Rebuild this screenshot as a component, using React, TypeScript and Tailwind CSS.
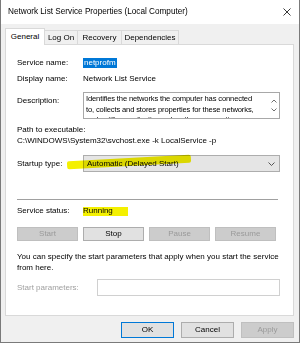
import React from 'react';

const font = { fontFamily: '"Liberation Sans", Arial, sans-serif' };

const Btn = ({ label, disabled = false, def = false, w = 'w-[61px]' }: { label: string; disabled?: boolean; def?: boolean; w?: string }) => (
  <div
    className={`${w} h-[14px] flex items-center justify-center text-[8px] border ${
      disabled
        ? 'bg-[#cccccc] border-[#bfbfbf] text-[#9a9a9a]'
        : def
        ? 'bg-[#e1e1e1] border-[#0078d7] text-black'
        : 'bg-[#e1e1e1] border-[#adadad] text-black'
    }`}
  >
    {label}
  </div>
);

export default function App() {
  return (
    <div className="w-[300px] h-[346px] bg-white overflow-hidden text-black" style={font}>
      <div className="relative h-[343px] border-l border-r border-b border-[#7a7a7a] bg-[#f0f0f0] flex flex-col">
        {/* Title bar */}
        <div className="h-[24px] bg-white flex items-center justify-between pl-[7px] pr-[8px] shrink-0">
          <span className="text-[8.2px]">Network List Service Properties (Local Computer)</span>
          <svg width="8" height="8" viewBox="0 0 8 8">
            <path d="M0.5 0.5 L7.5 7.5 M7.5 0.5 L0.5 7.5" stroke="#222" strokeWidth="0.9" />
          </svg>
        </div>

        {/* Tabs */}
        <div className="flex items-end px-[4px] h-[20px] shrink-0">
          <div className="w-[40px] h-[17px] bg-white border border-b-0 border-[#d9d9d9] text-[8px] flex items-center justify-center relative top-[1px] z-10">
            General
          </div>
          <div className="w-[33px] h-[14px] border border-l-0 border-b-0 border-[#d9d9d9] text-[8px] flex items-center justify-center">
            Log On
          </div>
          <div className="w-[44px] h-[14px] border border-l-0 border-b-0 border-[#d9d9d9] text-[8px] flex items-center justify-center">
            Recovery
          </div>
          <div className="w-[57px] h-[14px] border border-l-0 border-b-0 border-[#d9d9d9] text-[8px] flex items-center justify-center">
            Dependencies
          </div>
        </div>

        {/* Panel */}
        <div className="relative mx-[4px] w-[289px] h-[272px] bg-white border border-[#d9d9d9] pt-[12px] pl-[11px] text-[8px] shrink-0">
          <div className="flex items-center h-[12px]">
            <span className="w-[66px]">Service name:</span>
            <span className="bg-[#0078d7] text-white px-[1px] leading-[10px]">netprofm</span>
          </div>
          <div className="flex items-center h-[12px] mt-[4px]">
            <span className="w-[66px]">Display name:</span>
            <span>Network List Service</span>
          </div>
          <div className="flex mt-[7px] h-[27px]">
            <span className="w-[66px] pt-[3px]">Description:</span>
            <div className="w-[197px] h-[27px] border border-[#a8a8a8] bg-white flex overflow-hidden">
              <div className="flex-1 pl-[2px] pt-[1px] text-[7.6px] tracking-[-0.15px] leading-[10.5px] whitespace-nowrap overflow-hidden">
                <div>Identifies the networks the computer has connected</div>
                <div>to, collects and stores properties for these networks,</div>
                <div>and notifies applications when these properties</div>
              </div>
              <div className="w-[11px] flex flex-col items-center justify-center gap-[5px] shrink-0">
                <svg width="6" height="4" viewBox="0 0 6 4"><path d="M0.5 3.5 L3 1 L5.5 3.5" stroke="#606060" fill="none" strokeWidth="0.9" /></svg>
                <svg width="6" height="4" viewBox="0 0 6 4"><path d="M0.5 0.5 L3 3 L5.5 0.5" stroke="#606060" fill="none" strokeWidth="0.9" /></svg>
              </div>
            </div>
          </div>
          <div className="mt-[5px] leading-[11px]">Path to executable:</div>
          <div className="leading-[11px]">C:\WINDOWS\System32\svchost.exe -k LocalService -p</div>
          <div className="flex items-center mt-[9px] h-[17px]">
            <span className="w-[66px]">Startup type:</span>
            <div className="w-[197px] h-[17px] bg-[#e5e5e5] border border-[#adadad] flex items-center justify-between pl-[3px] pr-[4px]">
              <span>Automatic (Delayed Start)</span>
              <svg width="7" height="4" viewBox="0 0 7 4"><path d="M0.5 0.5 L3.5 3.5 L6.5 0.5" stroke="#444" fill="none" strokeWidth="0.9" /></svg>
            </div>
          </div>
          <div className="mt-[27px] w-[261px] h-px bg-[#a0a0a0]" />
          <div className="flex items-center h-[12px] mt-[5px]">
            <span className="w-[66px]">Service status:</span>
            <span>Running</span>
          </div>
          <div className="flex gap-[5px] mt-[10px]">
            <Btn label="Start" disabled />
            <Btn label="Stop" />
            <Btn label="Pause" disabled />
            <Btn label="Resume" disabled />
          </div>
          <div className="mt-[10px] leading-[11px]">
            <div>You can specify the start parameters that apply when you start the service</div>
            <div>from here.</div>
          </div>
          <div className="flex items-center mt-[6px] h-[17px]">
            <span className="w-[80px] text-[#a0a0a0]">Start parameters:</span>
            <div className="w-[183px] h-[17px] border border-[#d0d0d0] bg-white" />
          </div>
        </div>

        {/* Bottom buttons */}
        <div className="flex justify-end gap-[7px] pr-[5px] mt-[6px]">
          <Btn label="OK" def w="w-[53px] h-[16px]" />
          <Btn label="Cancel" w="w-[53px] h-[16px]" />
          <Btn label="Apply" disabled w="w-[53px] h-[16px]" />
        </div>

        {/* Highlighter marks */}
        <div className="absolute left-[66px] top-[158px] w-[124px] h-[8px] bg-[#f4f000] mix-blend-multiply -rotate-[3deg] rounded-[2px]" />
        <div className="absolute left-[82px] top-[207px] w-[45px] h-[9px] bg-[#f4f000] mix-blend-multiply" />
      </div>
    </div>
  );
}
